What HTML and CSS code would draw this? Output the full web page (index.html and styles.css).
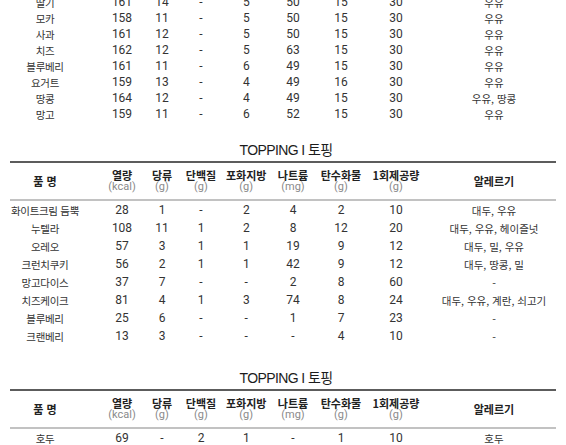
FILE: index.html
```html
<!DOCTYPE html>
<html lang="ko">
<head>
<meta charset="utf-8">
<link rel="stylesheet" href="styles.css">
</head>
<body>
<div class="page">
  <div class="table table-top">
    <div class="row"><span>딸기</span><span>161</span><span>14</span><span>-</span><span>5</span><span>50</span><span>15</span><span>30</span><span>우유</span></div>
    <div class="row"><span>모카</span><span>158</span><span>11</span><span>-</span><span>5</span><span>50</span><span>15</span><span>30</span><span>우유</span></div>
    <div class="row"><span>사과</span><span>161</span><span>12</span><span>-</span><span>5</span><span>50</span><span>15</span><span>30</span><span>우유</span></div>
    <div class="row"><span>치즈</span><span>162</span><span>12</span><span>-</span><span>5</span><span>63</span><span>15</span><span>30</span><span>우유</span></div>
    <div class="row"><span>블루베리</span><span>161</span><span>11</span><span>-</span><span>6</span><span>49</span><span>15</span><span>30</span><span>우유</span></div>
    <div class="row"><span>요거트</span><span>159</span><span>13</span><span>-</span><span>4</span><span>49</span><span>16</span><span>30</span><span>우유</span></div>
    <div class="row"><span>땅콩</span><span>164</span><span>12</span><span>-</span><span>4</span><span>49</span><span>15</span><span>30</span><span>우유, 땅콩</span></div>
    <div class="row"><span>망고</span><span>159</span><span>11</span><span>-</span><span>6</span><span>52</span><span>15</span><span>30</span><span>우유</span></div>
  </div>

  <section class="section section-2">
    <h2 class="title">TOPPING I 토핑</h2>
    <div class="table">
      <div class="row head">
        <span>품 명</span>
        <span><b>열량</b><i>(kcal)</i></span>
        <span><b>당류</b><i>(g)</i></span>
        <span><b>단백질</b><i>(g)</i></span>
        <span><b>포화지방</b><i>(g)</i></span>
        <span><b>나트륨</b><i>(mg)</i></span>
        <span><b>탄수화물</b><i>(g)</i></span>
        <span><b>1회제공량</b><i>(g)</i></span>
        <span>알레르기</span>
      </div>
      <div class="row"><span>화이트크림 듬뿍</span><span>28</span><span>1</span><span>-</span><span>2</span><span>4</span><span>2</span><span>10</span><span>대두, 우유</span></div>
      <div class="row"><span>누텔라</span><span>108</span><span>11</span><span>1</span><span>2</span><span>8</span><span>12</span><span>20</span><span>대두, 우유, 헤이즐넛</span></div>
      <div class="row"><span>오레오</span><span>57</span><span>3</span><span>1</span><span>1</span><span>19</span><span>9</span><span>12</span><span>대두, 밀, 우유</span></div>
      <div class="row"><span>크런치쿠키</span><span>56</span><span>2</span><span>1</span><span>1</span><span>42</span><span>9</span><span>12</span><span>대두, 땅콩, 밀</span></div>
      <div class="row"><span>망고다이스</span><span>37</span><span>7</span><span>-</span><span>-</span><span>2</span><span>8</span><span>60</span><span>-</span></div>
      <div class="row"><span>치즈케이크</span><span>81</span><span>4</span><span>1</span><span>3</span><span>74</span><span>8</span><span>24</span><span>대두, 우유, 계란, 쇠고기</span></div>
      <div class="row"><span>블루베리</span><span>25</span><span>6</span><span>-</span><span>-</span><span>1</span><span>7</span><span>23</span><span>-</span></div>
      <div class="row"><span>크랜베리</span><span>13</span><span>3</span><span>-</span><span>-</span><span>-</span><span>4</span><span>10</span><span>-</span></div>
    </div>
  </section>

  <section class="section section-3">
    <h2 class="title">TOPPING I 토핑</h2>
    <div class="table">
      <div class="row head">
        <span>품 명</span>
        <span><b>열량</b><i>(kcal)</i></span>
        <span><b>당류</b><i>(g)</i></span>
        <span><b>단백질</b><i>(g)</i></span>
        <span><b>포화지방</b><i>(g)</i></span>
        <span><b>나트륨</b><i>(mg)</i></span>
        <span><b>탄수화물</b><i>(g)</i></span>
        <span><b>1회제공량</b><i>(g)</i></span>
        <span>알레르기</span>
      </div>
      <div class="row"><span>호두</span><span>69</span><span>-</span><span>2</span><span>1</span><span>-</span><span>1</span><span>10</span><span>호두</span></div>
    </div>
  </section>
</div>
</body>
</html>
```

FILE: styles.css
```css
html, body {
  margin: 0;
  padding: 0;
  background: #ffffff;
}

body {
  font-family: Roboto, "Noto Sans CJK KR", "Noto Sans", sans-serif;
  color: #333333;
  overflow: hidden;
  height: 445px;
}

.page {
  padding: 0 10px;
  width: 546px;
}

.table-top {
  margin-top: -6px;
}

.row {
  display: grid;
  grid-template-columns: 72.5px 59px 39px 42.5px 46.5px 47px 51.5px 71.5px 116.5px;
  height: 18px;
  font-size: 12px;
}

.table-top .row {
  height: 16px;
}

.row > span {
  display: flex;
  flex-direction: column;
  align-items: center;
  justify-content: center;
  white-space: nowrap;
  box-sizing: border-box;
}

.row > span:nth-child(1) {
  padding-right: 2.5px;
  font-family: "Noto Sans CJK KR", sans-serif;
  font-size: 10.5px;
  letter-spacing: -0.3px;
}
.row > span:nth-child(2) { padding-left: 20px; }
.row > span:nth-child(3) { padding-left: 2px; }
.row > span:nth-child(4) { padding-right: 1.5px; }
.row > span:nth-child(7) { padding-right: 2.5px; }
.row > span:nth-child(8) { padding-right: 15.5px; }
.row > span:nth-child(9) {
  padding-right: 7.5px;
  font-family: "Noto Sans CJK KR", sans-serif;
  font-size: 10.5px;
}

.section-2 {
  margin-top: 17.5px;
}

.section-3 {
  margin-top: 22.5px;
}

.title {
  margin: 0 0 1.5px 0;
  height: 20px;
  line-height: 20px;
  text-align: center;
  font-family: "Liberation Sans", "Noto Sans CJK KR", sans-serif;
  font-weight: normal;
  font-size: 14px;
  letter-spacing: -0.6px;
  color: #1c1c1c;
  padding-left: 6px;
}

.row.head {
  height: auto;
  border-top: 2px solid #5c5c5c;
  border-bottom: 2px solid #c2c2c2;
  padding: 6px 0;
}

.row.head > span {
  font-family: "Noto Sans CJK KR", sans-serif;
  font-weight: bold;
  font-size: 11px;
  letter-spacing: 0;
  color: #222222;
}

.row.head b {
  display: block;
  line-height: 12px;
  font-weight: bold;
}

.row.head i {
  display: block;
  line-height: 12px;
  font-style: normal;
  font-weight: normal;
  font-family: Roboto, "Noto Sans CJK KR", sans-serif;
  color: #8a8a8a;
  font-size: 11px;
}
```
